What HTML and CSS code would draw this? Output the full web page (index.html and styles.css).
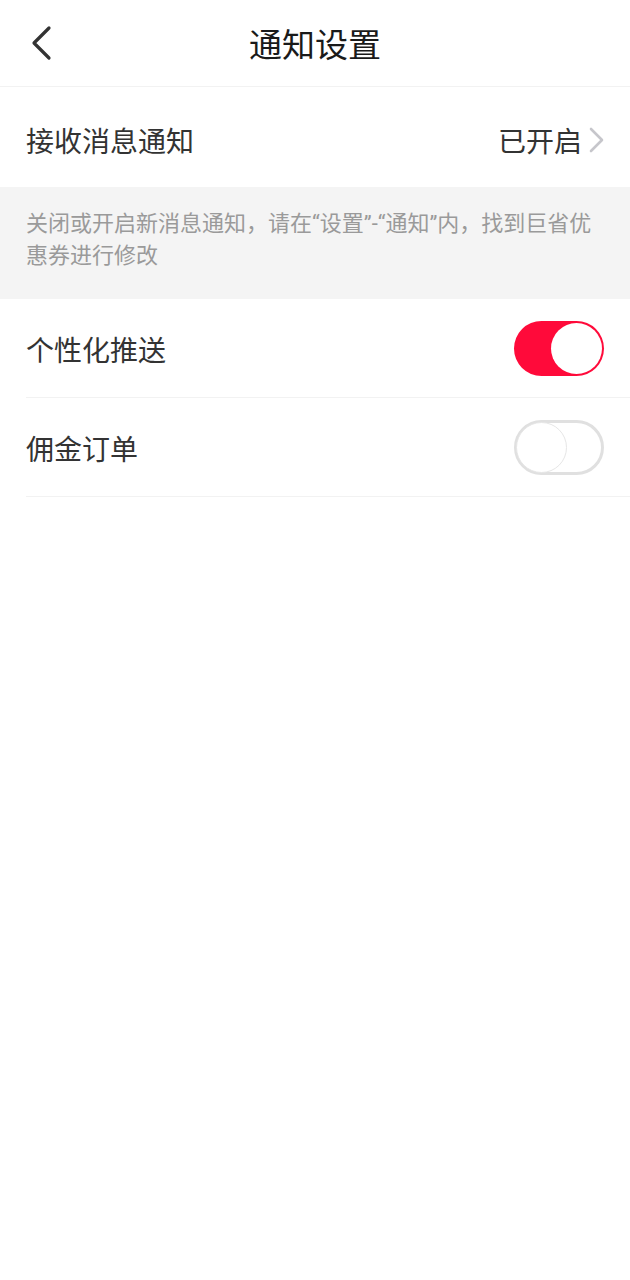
FILE: index.html
```html
<!DOCTYPE html>
<html lang="zh-CN">
<head>
<meta charset="utf-8">
<title>通知设置</title>
<link rel="stylesheet" href="styles.css">
</head>
<body>
<div class="page">
  <header class="header">
    <span class="back">
      <svg width="24" height="36" viewBox="0 0 24 36"><path d="M19 3 L4 18 L19 33" fill="none" stroke="#333" stroke-width="3.2" stroke-linecap="round" stroke-linejoin="round"/></svg>
    </span>
    <h1 class="title">通知设置</h1>
  </header>
  <div class="row row-first">
    <span class="label">接收消息通知</span>
    <span class="value">已开启
      <svg class="chev" width="15" height="26" viewBox="0 0 15 26"><path d="M2 2 L13 13 L2 24" fill="none" stroke="#c6c6cb" stroke-width="2.6" stroke-linecap="round" stroke-linejoin="round"/></svg>
    </span>
  </div>
  <div class="notice">关闭或开启新消息通知，请在“设置”-“通知”内，找到巨省优惠券进行修改</div>
  <div class="row row-line">
    <span class="label">个性化推送</span>
    <span class="switch on"><span class="knob"></span></span>
  </div>
  <div class="row row-line">
    <span class="label">佣金订单</span>
    <span class="switch off"><span class="knob"></span></span>
  </div>
</div>
</body>
</html>
```
FILE: styles.css
```css
* { box-sizing: border-box; }
html, body { margin: 0; padding: 0; background: #fff; }
body { font-family: "Noto Sans CJK SC", "Noto Sans", sans-serif; color: #333; }
.page { width: 630px; }
.header {
  height: 87px;
  display: flex;
  align-items: center;
  justify-content: center;
  position: relative;
  border-bottom: 1px solid #f2f2f2;
}
.back {
  position: absolute;
  left: 30px;
  top: 25px;
  display: flex;
}
.title {
  margin: 0;
  font-size: 33px;
  font-weight: 400;
  color: #1a1a1a;
  line-height: 1;
}
.row {
  display: flex;
  align-items: center;
  justify-content: space-between;
  padding: 0 26px;
}
.row-first { height: 100px; padding-top: 5px; }
.label { font-size: 28px; color: #333; line-height: 1; }
.value {
  display: flex;
  align-items: center;
  gap: 7px;
  font-size: 28px;
  color: #333;
  line-height: 1;
}
.chev { margin-top: 1px; }
.notice {
  background: #f4f4f4;
  padding: 21px 26px 27px;
  font-family: Roboto, "Noto Sans CJK SC", sans-serif;
  font-size: 22px;
  line-height: 32px;
  color: #9a9a9a;
}
.row-line {
  height: 99px;
  margin-left: 26px;
  padding-left: 0;
  padding-top: 1px;
  border-bottom: 1px solid #f2f2f2;
}
.switch {
  width: 90px;
  height: 55px;
  border-radius: 28px;
  position: relative;
  flex: none;
}
.switch.on { background: #ff0a3a; }
.switch.off { background: #fff; border: 3px solid #e0e0e0; }
.knob {
  position: absolute;
  width: 51px;
  height: 51px;
  border-radius: 50%;
  background: #fff;
}
.switch.on .knob { right: 2px; top: 2px; }
.switch.off .knob { left: -1px; top: -1px; width: 51px; height: 51px; border: 1px solid #e6e6e6; }
```
